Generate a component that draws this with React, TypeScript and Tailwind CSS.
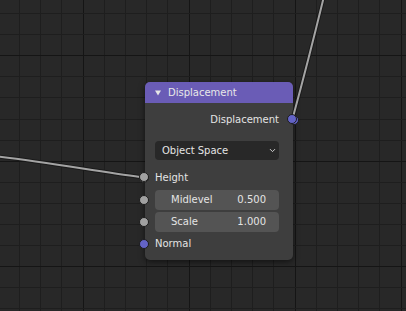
import { ChevronDown } from 'lucide-react';

// grid lines of the node editor canvas
const gridX = Array.from({ length: 19 }, (_, i) => ({ pos: Math.round(19 + i * 21.2) + 0.5, major: i % 5 === 3 }));
const gridY = Array.from({ length: 15 }, (_, i) => ({ pos: Math.round(13 + i * 21.1) + 0.5, major: i % 5 === 2 }));

const Socket = ({ color, side }: { color: 'gray' | 'purple'; side: 'left' | 'right' }) => (
    <span
        className={`absolute top-1/2 -translate-y-1/2 w-[10px] h-[10px] rounded-full border border-[#1c1c1c] ${
            color === 'gray' ? 'bg-[#a1a1a1]' : 'bg-[#6363c7]'
        } ${side === 'left' ? 'left-[-6px]' : 'right-[-6px]'}`}
    />
);

const ValueField = ({ label, value }: { label: string; value: string }) => (
    <div className="relative h-[20px]">
        <Socket color="gray" side="left" />
        <div className="ml-[10px] mr-[14px] h-full rounded-[4px] bg-[#545454] flex items-center justify-between pl-[16px] pr-[13px] text-[#e4e4e4]">
            <span>{label}</span>
            <span>{value}</span>
        </div>
    </div>
);

function App() {
    return (
        <div
            className="relative w-[406px] h-[311px] overflow-hidden bg-[#282828]"
            style={{ fontFamily: '"DejaVu Sans", sans-serif' }}
        >
            {/* Grid */}
            <svg className="absolute inset-0" width={406} height={311}>
                {gridX.map((l) => (
                    <line
                        key={'x' + l.pos}
                        x1={l.pos}
                        y1={0}
                        x2={l.pos}
                        y2={311}
                        stroke={l.major ? '#151515' : '#1e1e1e'}
                        strokeWidth={1}
                    />
                ))}
                {gridY.map((l) => (
                    <line
                        key={'y' + l.pos}
                        x1={0}
                        y1={l.pos}
                        x2={406}
                        y2={l.pos}
                        stroke={l.major ? '#151515' : '#1e1e1e'}
                        strokeWidth={1}
                    />
                ))}
            </svg>

            {/* Node */}
            <div className="absolute left-[145px] top-[82px] w-[148px] rounded-[5px] bg-[#3e3e3e] shadow-[0_2px_6px_rgba(0,0,0,0.55)] text-[10px] leading-none">
                {/* Header */}
                <div className="h-[21px] rounded-t-[5px] bg-[#6a5cb6] flex items-center pl-[10px] gap-[7px] text-[#e8e8e8]">
                    <svg width="6" height="6" viewBox="0 0 6 6">
                        <polygon points="0,0.5 6,0.5 3,5.5" fill="#e6e6e6" />
                    </svg>
                    <span>Displacement</span>
                </div>

                {/* Body */}
                <div className="flex flex-col pt-[6px] pb-[5px]">
                    <div className="relative h-[22px] flex items-center justify-end pr-[14px] text-[#e4e4e4]">
                        <span>Displacement</span>
                        <Socket color="purple" side="right" />
                    </div>

                    <div className="mt-[10px] ml-[10px] mr-[14px] h-[19px] rounded-[4px] bg-[#282828] flex items-center justify-between pl-[7px] pr-[2px] text-[#e4e4e4]">
                        <span>Object Space</span>
                        <ChevronDown className="w-[9px] h-[9px] text-[#d8d8d8]" strokeWidth={2.5} />
                    </div>

                    <div className="relative mt-[7px] h-[22px] flex items-center pl-[10px] text-[#e4e4e4]">
                        <Socket color="gray" side="left" />
                        <span>Height</span>
                    </div>

                    <div className="mt-[1px]">
                        <ValueField label="Midlevel" value="0.500" />
                    </div>
                    <div className="mt-[2px]">
                        <ValueField label="Scale" value="1.000" />
                    </div>

                    <div className="relative mt-[1px] h-[22px] flex items-center pl-[10px] text-[#e4e4e4]">
                        <Socket color="purple" side="left" />
                        <span>Normal</span>
                    </div>
                </div>
            </div>

            {/* Wires, drawn over the canvas */}
            <svg className="absolute inset-0 pointer-events-none" width={406} height={311}>
                <path d="M -10 155.5 C 40 161, 95 171, 140 177" fill="none" stroke="#1a1a1a" strokeWidth={4} />
                <path d="M -10 155.5 C 40 161, 95 171, 140 177" fill="none" stroke="#a4a4a4" strokeWidth={2} />
                <path d="M 293 117 C 299 95, 311 50, 326 -12" fill="none" stroke="#1a1a1a" strokeWidth={4} />
                <path d="M 293 117 C 299 95, 311 50, 326 -12" fill="none" stroke="#a4a4a4" strokeWidth={2} />
            </svg>
            {/* sockets that sit on top of wire ends */}
            <span className="absolute left-[139px] top-[172px] w-[10px] h-[10px] rounded-full border border-[#1c1c1c] bg-[#a1a1a1]" />
            <span className="absolute left-[287px] top-[114px] w-[10px] h-[10px] rounded-full border border-[#1c1c1c] bg-[#6363c7]" />
        </div>
    );
}

export default App;
